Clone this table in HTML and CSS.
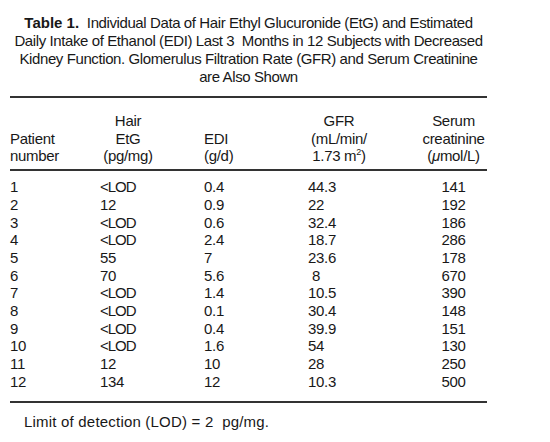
FILE: index.html
```html
<!DOCTYPE html>
<html lang="en">
<head>
	<meta charset="UTF-8">
	<title>Table 1</title>
	<link rel="stylesheet" href="styles.css">
</head>
<body>
	<div class="sheet">
		<div class="caption">
			<p><b class="label">Table 1.</b> Individual Data of Hair Ethyl Glucuronide (EtG) and Estimated</p>
			<p>Daily Intake of Ethanol (EDI) Last 3 &nbsp;Months in 12 Subjects with Decreased</p>
			<p>Kidney Function. Glomerulus Filtration Rate (GFR) and Serum Creatinine</p>
			<p>are Also Shown</p>
		</div>

		<table class="data">
			<colgroup>
				<col class="w1">
				<col class="w2">
				<col class="w3">
				<col class="w4">
				<col class="w5">
			</colgroup>
			<thead>
				<tr>
					<th class="c1">Patient<br>number</th>
					<th class="c2">Hair<br>EtG<br>(pg/mg)</th>
					<th class="c3">EDI<br>(g/d)</th>
					<th class="c4">GFR<br>(mL/min/<br>1.73 m<sup>2</sup>)</th>
					<th class="c5">Serum<br>creatinine<br>(<i>μ</i>mol/L)</th>
				</tr>
			</thead>
			<tbody>
				<tr><td>1</td><td class="lod">&lt;LOD</td><td>0.4</td><td>44.3</td><td>141</td></tr>
				<tr><td>2</td><td>12</td><td>0.9</td><td>22</td><td>192</td></tr>
				<tr><td>3</td><td class="lod">&lt;LOD</td><td>0.6</td><td>32.4</td><td>186</td></tr>
				<tr><td>4</td><td class="lod">&lt;LOD</td><td>2.4</td><td>18.7</td><td>286</td></tr>
				<tr><td>5</td><td>55</td><td>7</td><td>23.6</td><td>178</td></tr>
				<tr><td>6</td><td>70</td><td>5.6</td><td class="pad">8</td><td>670</td></tr>
				<tr><td>7</td><td class="lod">&lt;LOD</td><td>1.4</td><td>10.5</td><td>390</td></tr>
				<tr><td>8</td><td class="lod">&lt;LOD</td><td>0.1</td><td>30.4</td><td>148</td></tr>
				<tr><td>9</td><td class="lod">&lt;LOD</td><td>0.4</td><td>39.9</td><td>151</td></tr>
				<tr><td>10</td><td class="lod">&lt;LOD</td><td>1.6</td><td>54</td><td>130</td></tr>
				<tr><td>11</td><td>12</td><td>10</td><td>28</td><td>250</td></tr>
				<tr><td>12</td><td>134</td><td>12</td><td>10.3</td><td>500</td></tr>
			</tbody>
		</table>

		<p class="note">Limit of detection (LOD) = 2 &nbsp;pg/mg.</p>
	</div>
</body>
</html>
```

FILE: styles.css
```css
*{
	padding:0;
	margin:0;
}
body{
	background: #fff;
	color: #181818;
	font-family: "Liberation Sans", Arial, sans-serif;
	font-size: 15px;
}
.sheet{
	width: 477px;
	margin-left: 10px;
	padding-top: 14px;
}
.caption p{
	text-align: center;
	white-space: nowrap;
	line-height: 18px;
	letter-spacing: -0.4px;
}
.caption .label{
	letter-spacing: 0;
	margin-right: 4px;
}
.data{
	width: 477px;
	margin-top: 10px;
	table-layout: fixed;
	border-collapse: collapse;
	border-top: 2px solid #333;
	border-bottom: 2px solid #333;
	line-height: 17.7px;
	letter-spacing: -0.3px;
}
.w1{ width: 90px; }
.w2{ width: 104px; }
.w3{ width: 104px; }
.w4{ width: 112px; }
.w5{ width: 67px; }
.data th{
	font-weight: normal;
	vertical-align: bottom;
	text-align: center;
	white-space: nowrap;
	padding-top: 14px;
	padding-bottom: 4px;
	border-bottom: 2px solid #333;
}
.data td{
	text-align: left;
	white-space: nowrap;
}
.data tbody tr:first-child td{
	padding-top: 7px;
}
.data tbody tr:last-child td{
	padding-bottom: 10px;
}
.data th.c1{
	text-align: left;
}
.data th.c2{
	padding-right: 48px;
}
.data th.c3{
	padding-right: 86px;
}
.data th.c4{
	padding-right: 50px;
}
.data td:nth-child(5){
	text-align: center;
}
.data sup{
	font-size: 9px;
	line-height: 0;
}
.data td.lod{
	letter-spacing: -1px;
}
.data td.pad{
	padding-left: 4px;
}
.note{
	margin-top: 10px;
	padding-left: 14px;
	line-height: 18px;
	letter-spacing: 0.2px;
}
```
